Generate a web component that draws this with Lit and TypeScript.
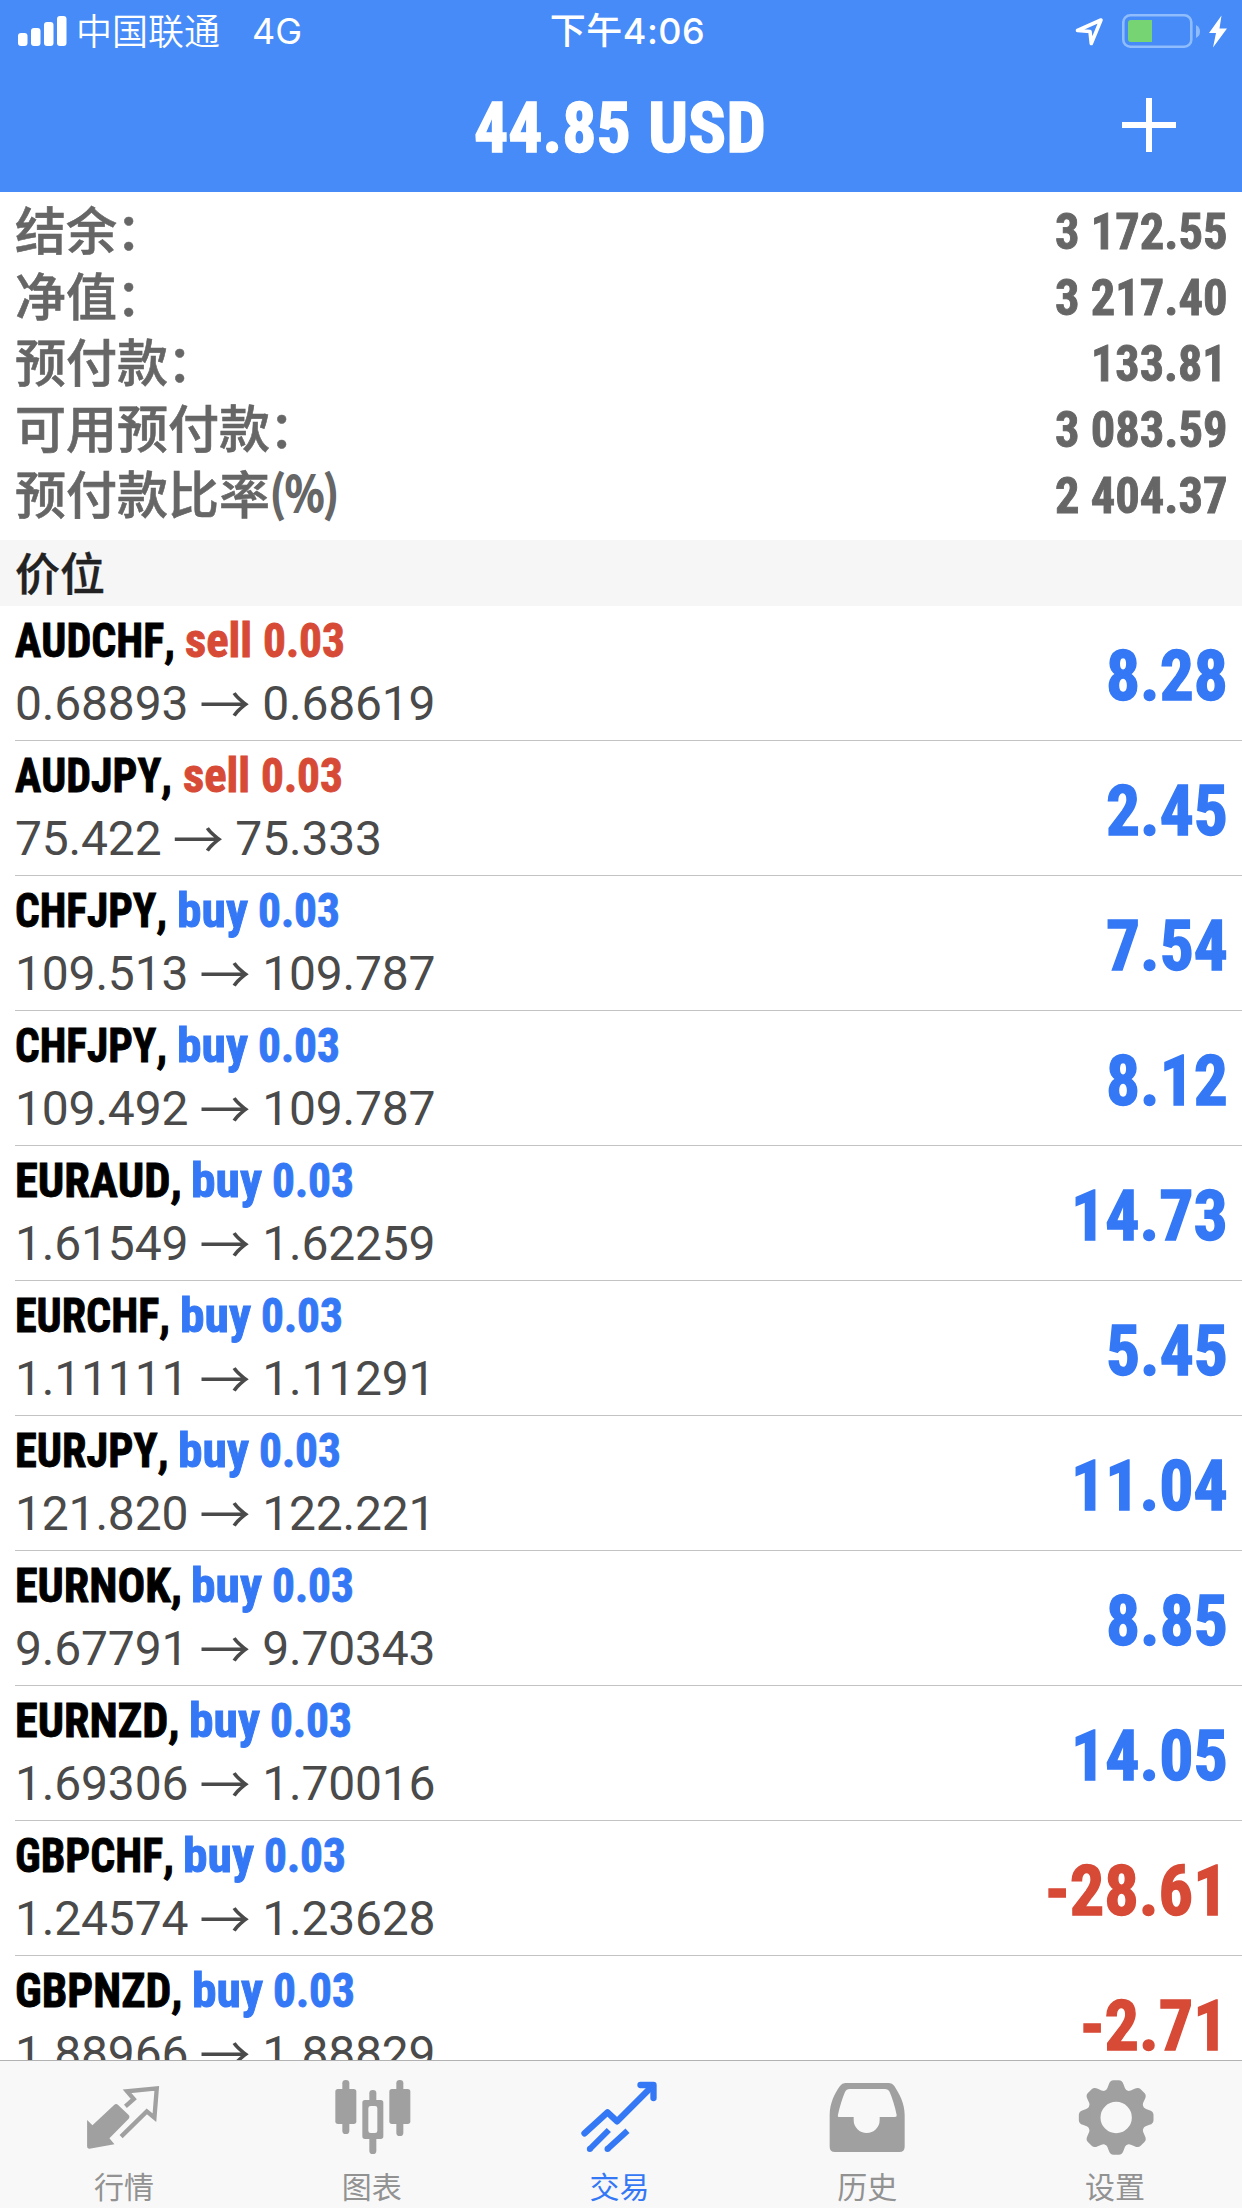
import { LitElement, html, svg, css } from "lit";
import { customElement, property } from "lit/decorators.js";
import { classMap } from "lit/directives/class-map.js";

/** Advance widths, in em, of the condensed bold numerals. */
const advance = (ch: string) => (ch === "." ? 0.24 : ch === " " ? 0.245 : ch === "-" ? 0.37 : 0.5);
const numberWidth = (text: string, size: number) =>
  [...text].reduce((sum, ch) => sum + advance(ch) * size, 0);

/** One run of bold text, condensed to a given length. */
@customElement("cond-text")
class CondText extends LitElement {
  @property() text = "";
  @property({ type: Number }) size = 48;
  /** Length of the run; taken from the numeral widths when left at 0. */
  @property({ type: Number }) length = 0;
  /** Width of the box, when the run is followed by a gap. */
  @property({ type: Number }) box = 0;
  @property({ type: Number }) height = 60;
  @property({ type: Number }) baseline = 51;
  @property({ type: Number }) weight = 0.9;

  static styles = css`
    :host { display: block; flex: none; }
    svg { display: block; overflow: visible; }
    text {
      font-family: var(--face, Roboto), "Liberation Sans", Arial, sans-serif;
      font-stretch: 75%;
      font-weight: var(--face-weight, 700);
      fill: currentColor;
      stroke: currentColor;
      font-kerning: none;
      white-space: pre;
    }
  `;

  render() {
    const len = this.length || numberWidth(this.text, this.size);
    return html`<svg width=${this.box || len} height=${this.height}>
      <text x="0" y=${this.baseline} font-size=${this.size} stroke-width=${this.weight}
        textLength=${len} lengthAdjust="spacingAndGlyphs">${this.text}</text>
    </svg>`;
  }
}

type Side = "buy" | "sell";
interface Position {
  symbol: string;
  length: number;
  box: number;
  side: Side;
  open: string;
  now: string;
  profit: string;
}

const POSITIONS: Position[] = [
  { symbol: "AUDCHF", length: 160, box: 169.5, side: "sell", open: "0.68893", now: "0.68619", profit: "8.28" },
  { symbol: "AUDJPY", length: 157, box: 167.5, side: "sell", open: "75.422", now: "75.333", profit: "2.45" },
  { symbol: "CHFJPY", length: 152, box: 161.5, side: "buy", open: "109.513", now: "109.787", profit: "7.54" },
  { symbol: "CHFJPY", length: 152, box: 161.5, side: "buy", open: "109.492", now: "109.787", profit: "8.12" },
  { symbol: "EURAUD", length: 167, box: 175.5, side: "buy", open: "1.61549", now: "1.62259", profit: "14.73" },
  { symbol: "EURCHF", length: 155, box: 165, side: "buy", open: "1.11111", now: "1.11291", profit: "5.45" },
  { symbol: "EURJPY", length: 153.5, box: 162.5, side: "buy", open: "121.820", now: "122.221", profit: "11.04" },
  { symbol: "EURNOK", length: 167, box: 175.5, side: "buy", open: "9.67791", now: "9.70343", profit: "8.85" },
  { symbol: "EURNZD", length: 164.5, box: 174, side: "buy", open: "1.69306", now: "1.70016", profit: "14.05" },
  { symbol: "GBPCHF", length: 159, box: 167.5, side: "buy", open: "1.24574", now: "1.23628", profit: "-28.61" },
  { symbol: "GBPNZD", length: 167.5, box: 176.5, side: "buy", open: "1.88966", now: "1.88829", profit: "-2.71" },
];

const SUMMARY = [
  { label: "结余", unit: "：", value: "3 172.55" },
  { label: "净值", unit: "：", value: "3 217.40" },
  { label: "预付款", unit: "：", value: "133.81" },
  { label: "可用预付款", unit: "：", value: "3 083.59" },
  { label: "预付款比率", unit: "(%)", value: "2 404.37" },
];

const TOOTH = "M-33,-78 Q-25,-88 -22,-100 Q-18,-112 -8,-112 H8 Q18,-112 22,-100 Q25,-88 33,-78 Z";

const TABS = [
  {
    label: "行情",
    view: "254.7 237 234 234",
    icon: svg`<path d="M261,360 L277,376 L342,315 Q348,309 354,315 L385,344 Q391,350 385,357 L328,415 L343,433 L268,446 Q261,446 261,438 Z" fill="currentColor"/>
      <path d="M376,319 L401,297 L381,274 L470,265 L463,353 L440,334 L363,410" fill="none" stroke="currentColor" stroke-width="13"/>`,
  },
  {
    label: "图表",
    view: "998 237 234 234",
    icon: svg`<g fill="currentColor"><rect x="1026" y="240" width="21" height="162" rx="10"/><rect x="1005" y="267" width="63" height="105" rx="8"/>
      <rect x="1188" y="240" width="21" height="168" rx="10"/><rect x="1167" y="267" width="63" height="105" rx="8"/>
      <rect x="1107" y="270" width="21" height="40" rx="10"/><rect x="1107" y="405" width="21" height="57" rx="10"/>
      <path fill-rule="evenodd" d="M1094,300 H1141 Q1149,300 1149,308 V409 Q1149,417 1141,417 H1094 Q1086,417 1086,409 V308 Q1086,300 1094,300 Z M1111,318 Q1104,318 1104,325 V392 Q1104,399 1111,399 H1124 Q1131,399 1131,392 V325 Q1131,318 1124,318 Z"/></g>`,
  },
  {
    label: "交易",
    active: true,
    view: "361.5 237 234 234",
    icon: svg`<g fill="none" stroke="currentColor" stroke-width="19" stroke-linecap="round" stroke-linejoin="round">
      <path d="M375,400 L444,337 L473,364 L575,262"/><path d="M543,255 H582 V294"/></g>
      <path d="M391,447 L448,390 M444,447 L504,392" stroke="currentColor" stroke-width="18"/>
      <circle cx="391" cy="447" r="9" fill="currentColor"/><circle cx="444" cy="447" r="9" fill="currentColor"/>`,
  },
  {
    label: "历史",
    view: "85 237 234 234",
    icon: svg`<path fill="currentColor" fill-rule="evenodd" d="M137,249 H268 Q278,249 284,258 C300,283 315,310 315,345 V440 Q315,456 299,456 H106 Q90,456 90,440 V345 C90,310 105,280 121,258 Q127,249 137,249 Z M150,267 Q140,267 136,276 C128,295 120,320 115,344 Q113,351 119,351 H162 V360 A39,39 0 0 0 240,360 V351 H286 Q292,351 291,345 C286,320 278,295 270,276 Q266,267 255,267 Z"/>`,
  },
  {
    label: "设置",
    view: "829 237 234 234",
    icon: svg`<g transform="translate(949.5 352.5)"><circle r="67.5" fill="none" stroke="currentColor" stroke-width="41"/>
      ${[0, 45, 90, 135, 180, 225, 270, 315].map((a) => svg`<path d=${TOOTH} fill="currentColor" transform=${`rotate(${a})`}/>`)}</g>`,
  },
];

@customElement("app-root")
class AppRoot extends LitElement {
  static styles = css`
    :host {
      display: flex;
      flex-direction: column;
      width: 1242px;
      height: 2208px;
      overflow: hidden;
      background: #fff;
      font-family: "Liberation Sans", Arial, "Noto Sans CJK SC", sans-serif;
    }
    svg { display: block; flex: none; }
    .top { flex: none; height: 192px; background: #468bf7; color: #fff; }
    .status {
      display: grid;
      grid-template-columns: 1fr auto 1fr;
      height: 60px;
      align-items: center;
      padding: 0 15px 0 18px;
      box-sizing: border-box;
      font-family: Inter, "Noto Sans CJK SC", sans-serif;
      font-size: 36px;
      line-height: 60px;
    }
    .carrier { display: flex; align-items: center; font-weight: 300; }
    .carrier .name { margin: -3px 0 0 8px; font-family: "Noto Sans CJK SC", sans-serif; font-weight: 350; }
    .carrier .net { margin-left: 32px; margin-top: 1px; font-weight: 400; }
    .time { font-weight: 500; margin: 1px 0 0 10px; letter-spacing: 0.5px; }
    .indicators { display: flex; justify-content: flex-end; align-items: center; }
    .nav { display: grid; grid-template-columns: 1fr auto 1fr; height: 132px; }
    .title { display: flex; gap: 17px; margin-right: 2px; }
    .add { justify-self: end; padding: 38px 66px 0 0; }

    .summary { flex: none; height: 348px; padding: 6px 15px 0 15px; box-sizing: border-box; color: #666; }
    .line { display: flex; justify-content: space-between; height: 66px; }
    .label {
      display: flex;
      height: 60px;
      font-family: "Noto Sans CJK SC", sans-serif;
      font-weight: 500;
      font-size: 51px;
      line-height: 60px;
      -webkit-text-stroke: 0.6px currentColor;
    }
    .colon { margin-left: -1px; }
    .unit { --face: "Noto Sans CJK SC"; --face-weight: 500; }
    .section {
      flex: none;
      height: 66px;
      padding-left: 15px;
      background: #f6f6f6;
      color: #222;
      font: 500 45px/64px "Noto Sans CJK SC", sans-serif;
      -webkit-text-stroke: 0.4px currentColor;
    }
    .list { flex: 1; min-height: 0; overflow: hidden; padding-left: 15px; }
    .row {
      display: flex;
      justify-content: space-between;
      height: 135px;
      box-sizing: border-box;
      padding-right: 14px;
      border-bottom: 1px solid #c3c3c6;
    }
    .deal { display: flex; height: 70px; color: #000; }
    .sell, .loss { color: #d74a36; }
    .buy, .gain { color: #3478f6; }
    .lot { display: flex; }
    .prices {
      display: flex;
      font: 400 48px/56px Roboto, "Liberation Sans", sans-serif;
      font-kerning: none;
      letter-spacing: -0.18px;
      color: #4a4a4a;
      white-space: pre;
    }
    .arrow { font: 400 51px/53px "Noto Sans CJK SC", sans-serif; width: 47.5px; margin: 0 13.2px; text-indent: -2px; }

    .tabs {
      flex: none;
      display: grid;
      grid-template-columns: repeat(5, 1fr);
      height: 148px;
      box-sizing: border-box;
      padding-right: 3px;
      border-top: 1px solid #b2b2b2;
      background: #f8f8f8;
    }
    .tab {
      display: flex;
      flex-direction: column;
      align-items: center;
      padding-top: 18px;
      color: #a0a0a0;
    }
    .tab .caption { margin: 8px 0 0 0; font: 400 30px/40px "Noto Sans CJK SC", sans-serif; color: #929292; }
    .tab.active, .tab.active .caption { color: #3478f6; }
    .tab svg { overflow: visible; }
  `;

  private statusBar() {
    return html`<div class="status">
      <div class="carrier">
        <svg width="50" height="30" viewBox="0 0 50 30" fill="#fff">
          <rect x="0" y="17" width="9.5" height="13" rx="3"/><rect x="13" y="12" width="9.5" height="18" rx="3"/>
          <rect x="26" y="6" width="9.5" height="24" rx="3"/><rect x="39" y="0" width="9.5" height="30" rx="3"/>
        </svg>
        <span class="name">中国联通</span><span class="net">4G</span>
      </div>
      <div class="time">下午4:06</div>
      <div class="indicators">
        <svg width="152" height="36" viewBox="1075 12 152 36">
          <path d="M1077.5,29.5 L1101,19 L1091.3,42.5 L1090,30.5 Z" fill="none" stroke="#fff" stroke-width="3.6" stroke-linejoin="round"/>
          <rect x="1123.3" y="14.3" width="68" height="31.4" rx="7" fill="none" stroke="#8fbcfc" stroke-width="2.6"/>
          <path d="M1196,24 Q1200,26 1200,30.5 Q1200,35 1196,37 Z" fill="#8fbcfc"/>
          <path d="M1131,19 H1152 V41 H1131 Q1128,41 1128,38 V22 Q1128,19 1131,19 Z" fill="#76d572"/>
          <path d="M1221.5,14.5 L1209,32 H1216 L1213,46.5 L1227,27.5 H1219.5 Z" fill="#fff"/>
        </svg>
      </div>
    </div>`;
  }

  private row(p: Position) {
    const sell = p.side === "sell";
    return html`<div class="row">
      <div>
        <div class="deal">
          <cond-text .text=${p.symbol + ","} .length=${p.length} .box=${p.box}></cond-text>
          <div class=${classMap({ lot: true, [p.side]: true })}>
            <cond-text .text=${p.side} .length=${sell ? 67 : 71} .box=${sell ? 78 : 81}></cond-text>
            <cond-text text="0.03" .length=${82}></cond-text>
          </div>
        </div>
        <div class="prices"><span>${p.open}</span><span class="arrow">→</span><span>${p.now}</span></div>
      </div>
      <cond-text class=${p.profit.startsWith("-") ? "loss" : "gain"} .text=${p.profit}
        .size=${70} .height=${130} .baseline=${94} .weight=${1.4}></cond-text>
    </div>`;
  }

  render() {
    return html`
      <header class="top">
        ${this.statusBar()}
        <div class="nav">
          <span></span>
          <div class="title">
            <cond-text text="44.85" .size=${70} .height=${120} .baseline=${92} .weight=${1.4}></cond-text>
            <cond-text text="USD" .size=${70} .length=${118} .height=${120} .baseline=${92} .weight=${1.4}></cond-text>
          </div>
          <div class="add">
            <svg width="54" height="54" viewBox="0 0 54 54" stroke="#fff" stroke-width="6"><path d="M27,0 V54 M0,27 H54"/></svg>
          </div>
        </div>
      </header>
      <section class="summary">
        ${SUMMARY.map((s) => html`<div class="line">
          <div class="label"><span>${s.label}</span>${s.unit === "："
            ? html`<span class="colon">${s.unit}</span>`
            : html`<cond-text class="unit" .text=${s.unit} .size=${47} .length=${69} .baseline=${48.5} .weight=${2}></cond-text>`}</div>
          <cond-text .text=${s.value} .size=${49.5} .height=${66} .baseline=${50.5}></cond-text>
        </div>`)}
      </section>
      <div class="section">价位</div>
      <main class="list">${POSITIONS.map((p) => this.row(p))}</main>
      <nav class="tabs">
        ${TABS.map((t) => html`<div class=${classMap({ tab: true, active: !!t.active })}>
          <svg width="78" height="78" viewBox=${t.view}>${t.icon}</svg>
          <span class="caption">${t.label}</span>
        </div>`)}
      </nav>`;
  }
}
